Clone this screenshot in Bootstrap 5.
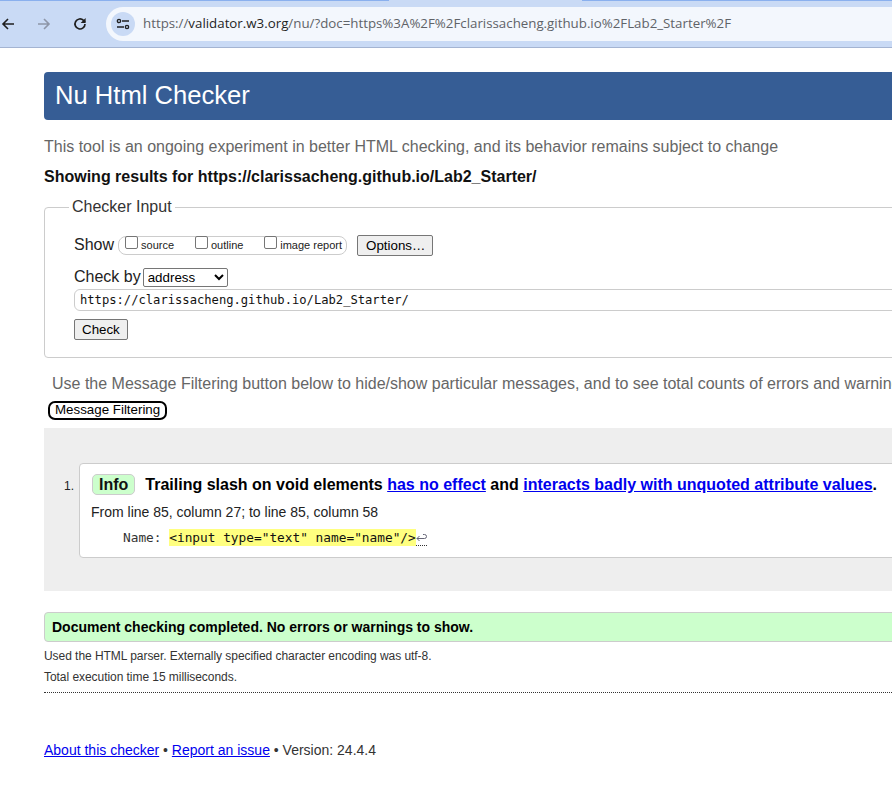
<!DOCTYPE html>
<html lang="en">
<head>
    <meta charset="UTF-8">
    <meta name="viewport" content="width=device-width, initial-scale=1.0">
    <title>Nu Html Checker</title>
    <link href="https://cdn.jsdelivr.net/npm/bootstrap@5.3.0/dist/css/bootstrap.min.css" rel="stylesheet">
    <style>
        html, body { overflow: hidden; height: 785px; }
        body { width: 892px; font-family: "Liberation Sans", Arial, sans-serif; color: #222; background: #fff; font-size: 16px; line-height: 1.2; }

        /* browser chrome */
        .tab-strip { height: 1px; background: #c9daf5; }
        .tab-strip span { height: 1px; background: #8ab0ee; }
        .tool-bar { height: 47px; background: #c9daf5; border-bottom: 1px solid #a4b4d2; padding-left: 0; }
        .nav-ico { width: 16px; height: 16px; flex: none; }
        .url-pill { height: 34px; margin-left: 18px; flex: 1 0 800px; background: #f3f7fd; border-radius: 17px 0 0 17px; padding-left: 5px; margin-right: -30px; }
        .site-ico { width: 24px; height: 24px; border-radius: 50%; background: #c9daf5; flex: none; }
        .url-txt { font-family: "Open Sans", "Liberation Sans", sans-serif; font-size: 13.31px; color: #5f6368; margin-left: 8px; white-space: nowrap; }
        .url-txt b { font-weight: 400; color: #1f1f1f; }

        /* page */
        .checker-page { width: 1100px; padding: 24px 0 0 44px; }
        .page-head { background: #365d95; color: #fff; border-radius: 4px 0 0 4px; height: 48px; font-size: 25.6px; padding: 8px 11px; line-height: 30px; }
        .sub-note { color: #666; margin: 17px 0 0; font-size: 16px; line-height: 19px; }
        .show-for { font-weight: 700; margin: 11px 0 0; font-size: 16px; line-height: 19px; color: #111; }
        .input-box { border: 1px solid #ccc; border-radius: 4px 0 0 4px; margin: 21px 0 0; padding: 25px 29px 17px; height: 151px; position: relative; }
        .input-box legend { position: absolute; top: -11px; left: 24px; float: none; width: auto; margin: 0; padding: 0 3px; font-size: 16px; line-height: 19px; background: #fff; color: #333; }
        .show-row { height: 24px; }
        .opt-group { border: 1px solid #ccc; border-radius: 8px; height: 19px; margin-left: 4px; padding: 0 4px 0 6px; width: 229px; font-size: 11px; }
        .opt-group label { display: flex; align-items: center; padding-top: 2px; }
        .opt-group input { appearance: none; width: 13px; height: 13px; border: 1px solid #767676; border-radius: 2px; margin: -7px 3px 0 0; background: #fff; }
        .gray-btn { background: #efefef; border: 1px solid #767676; border-radius: 2px; color: #000; font-size: 13.33px; line-height: 16px; padding: 2px 7px; height: 21px; }
        .opts-btn { margin-left: 10px; padding-left: 8px; }
        .by-row { margin-top: 10px; height: 20px; }
        .by-row select { appearance: auto; width: 85px; height: 19px; margin-left: 2px; font: 13.33px "Liberation Sans", sans-serif; border: 1px solid #767676; border-radius: 2px; padding: 0; background: #fff; color: #000; }
        .doc-field { border: 1px solid #ccc; border-radius: 6px; margin-top: 2px; height: 22px; font-family: "DejaVu Sans Mono", monospace; font-size: 12.15px; line-height: 20px; padding-left: 5px; width: 1020px; color: #111; }
        .filter-note { color: #666; margin: 16px 0 0 8px; white-space: nowrap; line-height: 19px; }
        .filter-btn { display: block; border: 2px solid #000; border-radius: 7px; background: #fff; font-size: 13.33px; line-height: 14px; color: #000; padding: 0 5px 1px; margin: 8px 0 0 4px; height: 19px; width: 119px; white-space: nowrap; }
        .msg-area { background: #eee; height: 163px; margin-top: 8px; padding: 35px 0 0 35px; }
        .msg-num { font-size: 12px; margin-top: 16px; width: 0; white-space: nowrap; transform: translateX(-15px); }
        .msg-card { background: #fff; border: 1px solid #ccc; border-radius: 4px 0 0 4px; height: 95px; width: 900px; padding: 10px 11px; }
        .info-tag { background: #ccffcc; border: 1px solid #ccc; border-radius: 5px; padding: 0 6px; height: 21px; line-height: 19px; font-weight: 700; font-size: 16px; color: #111; margin: 0 10px 0 1px; }
        .msg-head { font-weight: 700; line-height: 21px; color: #000; white-space: nowrap; }
        .msg-head a { color: #00e; }
        .msg-loc { font-size: 14px; line-height: 16px; margin-top: 9px; }
        .msg-code { font-family: "DejaVu Sans Mono", monospace; font-size: 12.8px; line-height: 17px; margin: 9px 0 0 32px; white-space: pre; color: #333; }
        .msg-code mark { background: #ffff80; color: #111; padding: 0; display: inline-block; height: 17px; vertical-align: top; }
        .ret-mark { display: inline-block; vertical-align: top; height: 17px; width: 11px; border-bottom: 1px dotted #333; }
        .ret-mark svg { display: block; margin-top: 4px; }
        .done-bar { background: #ccffcc; border: 1px solid #ccc; border-radius: 4px 0 0 4px; height: 30px; margin-top: 21px; padding: 0 7px; line-height: 28px; font-size: 14px; font-weight: 700; color: #000; }
        .small-info { font-size: 12px; line-height: 14px; margin: 7px 0 0; color: #333; letter-spacing: -.05px; }
        .dot-line { border: 0; border-top: 1px dotted #333; opacity: 1; margin: 8px 0 0; }
        .foot-row { margin-top: 49px; font-size: 14px; line-height: 17px; color: #333; }
        .foot-row a { color: #00e; }
    </style>
</head>
<body>
<div class="tab-strip d-flex">
    <span style="width:389px"></span>
    <span class="ms-auto" style="width:310px"></span>
</div>

<!-- browser toolbar -->
<div class="tool-bar d-flex align-items-center">
    <svg class="nav-ico" viewBox="0 0 16 16" fill="none" stroke="#1f1f1f" stroke-width="1.6"><path d="M14 8H3M8 3 3 8l5 5"/></svg>
    <svg class="nav-ico" style="margin-left:20px" viewBox="0 0 16 16" fill="none" stroke="#8d96a8" stroke-width="1.6"><path d="M2 8h11M8 3l5 5-5 5"/></svg>
    <svg class="nav-ico" style="margin-left:20px" viewBox="0 0 16 16" fill="none" stroke="#1f1f1f" stroke-width="1.7"><path d="M13 8a5 5 0 1 1-1.5-3.6L13 6"/><path d="M13.6 2v5H8.6z" fill="#1f1f1f" stroke="none"/></svg>
    <div class="url-pill d-flex align-items-center">
        <div class="site-ico d-flex align-items-center justify-content-center">
            <svg width="14" height="12" viewBox="0 0 14 12" fill="none" stroke="#1f1f1f" stroke-width="1.4"><path d="M6 3h7M1 9h7"/><circle cx="3" cy="3" r="1.6"/><circle cx="11" cy="9" r="1.6"/></svg>
        </div>
        <span class="url-txt">https://<b>validator.w3.org</b>/nu/?doc=https%3A%2F%2Fclarissacheng.github.io%2FLab2_Starter%2F</span>
    </div>
</div>

<div class="checker-page">
    <h1 class="page-head fw-normal mb-0">Nu Html Checker</h1>
    <p class="sub-note">This tool is an ongoing experiment in better HTML checking, and its behavior remains subject to change</p>
    <p class="show-for">Showing results for https://clarissacheng.github.io/Lab2_Starter/</p>

    <fieldset class="input-box">
        <legend>Checker Input</legend>
        <div class="show-row d-flex align-items-center">
            <span>Show</span>
            <div class="opt-group d-flex align-items-center justify-content-between">
                <label><input type="checkbox">source</label>
                <label><input type="checkbox">outline</label>
                <label><input type="checkbox">image report</label>
            </div>
            <button class="gray-btn opts-btn">Options…</button>
        </div>
        <div class="by-row d-flex align-items-center">
            <span>Check by</span>
            <select><option>address</option></select>
        </div>
        <div class="doc-field">https://clarissacheng.github.io/Lab2_Starter/</div>
        <button class="gray-btn mt-2 d-block">Check</button>
    </fieldset>

    <p class="filter-note">Use the Message Filtering button below to hide/show particular messages, and to see total counts of errors and warnings.</p>
    <button class="filter-btn">Message Filtering</button>

    <div class="msg-area d-flex">
        <div class="msg-num">1.</div>
        <div class="msg-card">
            <div class="msg-head d-flex align-items-center">
                <span class="info-tag">Info</span>
                <span>Trailing slash on void elements <a href="#">has no effect</a> and <a href="#">interacts badly with unquoted attribute values</a>.</span>
            </div>
            <div class="msg-loc">From line 85, column 27; to line 85, column 58</div>
            <div class="msg-code">Name: <mark>&lt;input type="text" name="name"/&gt;</mark><span class="ret-mark"><svg width="11" height="9" viewBox="0 0 11 9" fill="none" stroke="#667" stroke-width="1"><path d="M1 5.5h7.5a2 2 0 0 0 0-4H7M3.5 3 1 5.5 3.5 8"/></svg></span></div>
        </div>
    </div>

    <div class="done-bar">Document checking completed. No errors or warnings to show.</div>
    <p class="small-info">Used the HTML parser. Externally specified character encoding was utf-8.</p>
    <p class="small-info">Total execution time 15 milliseconds.</p>
    <hr class="dot-line">
    <div class="foot-row"><a href="#">About this checker</a> • <a href="#">Report an issue</a> • Version: 24.4.4</div>
</div>

<script src="https://cdn.jsdelivr.net/npm/bootstrap@5.3.0/dist/js/bootstrap.bundle.min.js"></script>
</body>
</html>
